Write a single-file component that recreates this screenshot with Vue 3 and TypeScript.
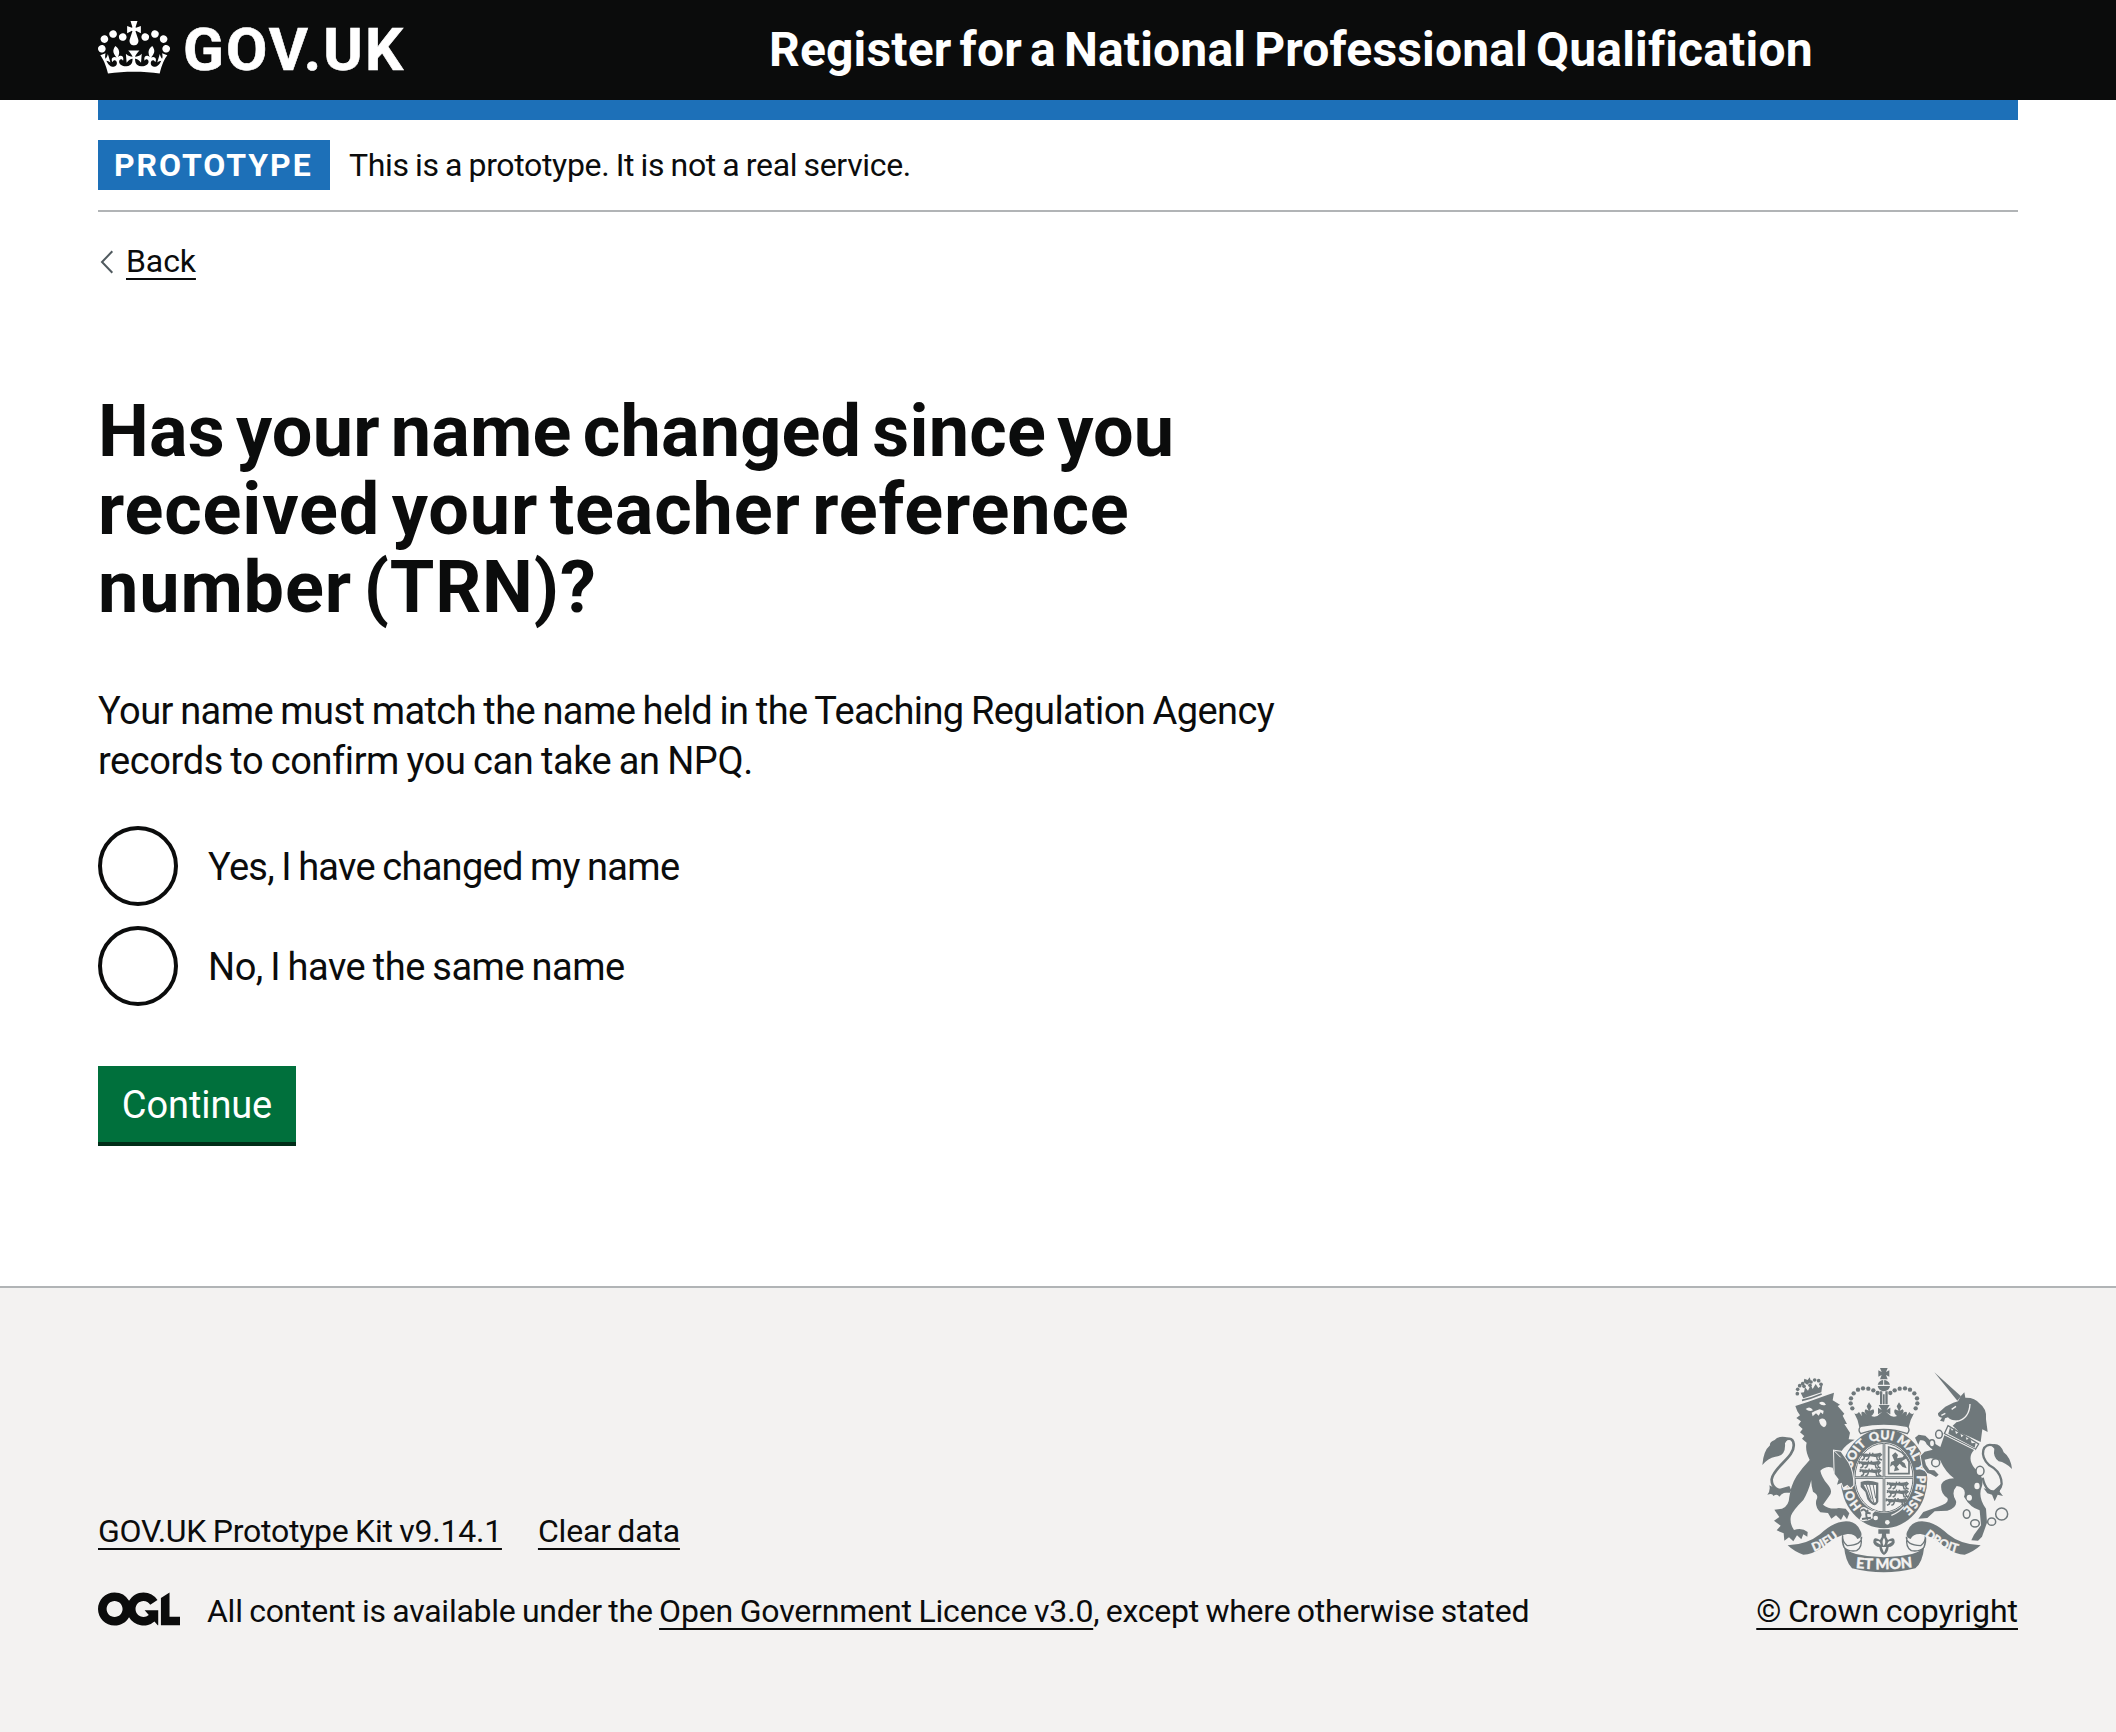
<script setup lang="ts">
interface Line { text: string; ls: number }
const headingLines: Line[] = [
  { text: 'Has your name changed since you', ls: 0.18 },
  { text: 'received your teacher reference', ls: 0.83 },
  { text: 'number (TRN)?', ls: 0.85 },
]
const bodyLines: Line[] = [
  { text: 'Your name must match the name held in the Teaching Regulation Agency', ls: -0.58 },
  { text: 'records to confirm you can take an NPQ.', ls: -0.42 },
]
const options: Line[] = [
  { text: 'Yes, I have changed my name', ls: -0.7 },
  { text: 'No, I have the same name', ls: -0.48 },
]
// pearls of the central crown's left arch; the right arch mirrors them
const pearls = [
  [337, 175], [332, 160], [333, 145], [341, 130], [354, 119], [369, 115], [385, 116], [400, 121], [413, 129],
]
const smallPearls = [
  [172, 131], [173, 118], [179, 107], [188, 101], [213, 96], [224, 90], [236, 92], [243, 103], [210, 106], [192, 109],
]
</script>

<template>
  <div class="page">
    <header class="header">
      <div class="container header-row">
        <a class="logo">
          <svg class="crown" viewBox="0 0 132 97" aria-hidden="true"><path fill="currentColor" fill-rule="evenodd" d="M25 30.2c3.5 1.5 7.7-.2 9.1-3.7 1.5-3.6-.2-7.8-3.9-9.2-3.6-1.4-7.6.3-9.1 3.9-1.4 3.5.3 7.5 3.9 9zM9 39.5c3.6 1.5 7.8-.2 9.2-3.7 1.5-3.6-.2-7.8-3.9-9.1-3.6-1.5-7.6.2-9.1 3.8-1.4 3.5.3 7.5 3.8 9zM4.4 57.2c3.5 1.5 7.7-.2 9.1-3.8 1.5-3.6-.2-7.7-3.9-9.1-3.5-1.5-7.6.3-9.1 3.8-1.4 3.5.3 7.6 3.9 9.1zm38.3-21.4c3.5 1.5 7.7-.2 9.1-3.8 1.5-3.6-.2-7.7-3.9-9.1-3.6-1.5-7.6.3-9.1 3.8-1.3 3.6.4 7.7 3.9 9.1zm64.4-5.6c-3.6 1.5-7.8-.2-9.1-3.7-1.5-3.6.2-7.8 3.8-9.2 3.6-1.4 7.7.3 9.2 3.9 1.3 3.5-.4 7.5-3.9 9zm15.9 9.3c-3.6 1.5-7.7-.2-9.1-3.7-1.5-3.6.2-7.8 3.7-9.1 3.6-1.5 7.7.2 9.2 3.8 1.5 3.5-.3 7.5-3.8 9zm4.7 17.7c-3.6 1.5-7.8-.2-9.2-3.8-1.5-3.6.2-7.7 3.9-9.1 3.6-1.5 7.7.3 9.2 3.8 1.3 3.5-.4 7.6-3.9 9.1zM89.3 35.8c-3.6 1.5-7.8-.2-9.2-3.8-1.4-3.6.2-7.7 3.9-9.1 3.6-1.5 7.7.3 9.2 3.8 1.4 3.6-.3 7.7-3.9 9.1zM69.7 17.7l8.9 4.7V9.3l-8.9 2.8c-.2-.3-.5-.6-.9-.9L72.4 0H59.6l3.5 11.2c-.3.3-.6.5-.9.9l-8.8-2.8v13.1l8.8-4.7c.3.3.6.7.9.9l-5 15.4v.1c-.2.8-.4 1.6-.4 2.4 0 4.1 3.1 7.5 7 8.1h.2c.3 0 .7.1 1 .1.4 0 .7 0 1-.1h.2c4-.6 7.1-4.1 7.1-8.1 0-.8-.1-1.7-.4-2.4V34l-5.1-15.4c.4-.2.7-.6 1-.9zM66 92.8c16.9 0 32.8 1.1 47.1 3.2 4-16.9 8.9-26.7 14-33.5l-9.6-3.4c1 4.9 1.1 7.2 0 10.2-1.5-1.4-3-4.3-4.2-8.7L108.6 76c2.8-2 5-3.2 7.5-3.3-4.4 9.4-10 11.9-13.6 11.2-4.3-.8-6.3-4.6-5.6-7.9 1-4.7 5.7-5.9 8-.5 4.3-8.7-3-11.4-7.6-8.8 7.1-7.2 7.9-13.5 2.1-21.1-8 6.1-8.1 12.3-4.5 20.8-4.7-5.4-12.1-2.5-9.5 6.2 3.4-5.2 7.9-2 7.2 3.1-.6 4.3-6.4 7.8-13.5 7.2-10.3-.9-10.9-8-11.2-13.8 2.5-.5 7.1 1.8 11 7.3L80.2 60c-4.1 4.4-8 5.3-12.3 5.4 1.4-4.4 8-11.6 8-11.6H55.5s6.4 7.2 7.9 11.6c-4.2-.1-8-1-12.3-5.4l1.4 16.4c3.9-5.5 8.5-7.7 10.9-7.3-.3 5.8-.9 12.8-11.1 13.8-7.2.6-12.9-2.9-13.5-7.2-.7-5 3.8-8.3 7.1-3.1 2.7-8.7-4.6-11.6-9.4-6.2 3.7-8.5 3.6-14.7-4.6-20.8-5.8 7.6-5 13.9 2.2 21.1-4.7-2.6-11.9.1-7.7 8.8 2.3-5.5 7.1-4.2 8.1.5.7 3.3-1.3 7.1-5.7 7.9-3.5.7-9-1.8-13.5-11.2 2.5.1 4.7 1.3 7.5 3.3l-4.7-15.4c-1.2 4.4-2.7 7.2-4.3 8.7-1.1-3-.9-5.3 0-10.2l-9.5 3.4c5 6.9 9.9 16.7 14 33.5 14.8-2.1 30.8-3.2 47.7-3.2z" /></svg>
          <span class="logo-text">GOV.UK</span>
        </a>
        <a class="service">Register for a National Professional Qualification</a>
      </div>
    </header>

    <div class="container">
      <div class="bar"></div>
      <div class="phase">
        <strong class="tag">PROTOTYPE</strong>
        <span class="phase-text">This is a prototype. It is not a real service.</span>
      </div>
      <a class="back">
        <svg class="chevron" viewBox="0 0 16 24" aria-hidden="true"><path d="M14.3 1.3 4 12l10.300 10.700" /></svg>
        <span class="link">Back</span>
      </a>
      <main class="main">
        <h1 class="heading">
          <span v-for="l in headingLines" :key="l.text" class="line" :style="{ letterSpacing: l.ls + 'px' }">{{ l.text }}</span>
        </h1>
        <p class="body">
          <span v-for="l in bodyLines" :key="l.text" class="line" :style="{ letterSpacing: l.ls + 'px' }">{{ l.text }}</span>
        </p>
        <div class="radios">
          <label v-for="o in options" :key="o.text" class="radio">
            <span class="circle"></span>
            <span class="radio-label" :style="{ letterSpacing: o.ls + 'px' }">{{ o.text }}</span>
          </label>
        </div>
        <button class="button" type="button">Continue</button>
      </main>
    </div>

    <footer class="footer">
      <div class="container footer-row">
        <div class="footer-left">
          <div class="links">
            <a class="link kit">GOV.UK Prototype Kit v9.14.1</a>
            <a class="link clear">Clear data</a>
          </div>
          <div class="licence">
            <svg class="ogl" viewBox="0 0 483.2 195.7" aria-label="OGL"><path fill="currentColor" d="M421.5 142.8V.1l-50.7 32.3v161.1h112.4v-50.7zm-122.3-9.6A47.12 47.12 0 0 1 221 97.8c0-26 21.1-47.1 47.1-47.1 16.7 0 31.4 8.7 39.7 21.8l42.7-27.2A97.63 97.63 0 0 0 268.1 0c-36.5 0-68.3 20.1-85.1 49.7A98 98 0 0 0 97.8 0C43.9 0 0 43.9 0 97.800s43.900 97.800 97.800 97.800c36.500 0 68.300-20.100 85.100-49.700a97.760 97.760 0 0 0 149.600 25.400l19.400 22.200h3v-87.800h-80l24.300 27.500zM97.800 145c-26 0-47.100-21.100-47.100-47.100s21.100-47.100 47.100-47.100 47.100 21.100 47.100 47.100S123.800 145 97.800 145" /></svg>
            <p class="licence-text"><span class="lt-a">All content is available under the </span><a class="link lt-b">Open Government Licence v3.0</a><span class="lt-c">, except where otherwise stated</span></p>
          </div>
        </div>
        <div class="copyright">
          <svg class="arms" viewBox="0 0 870 690" aria-hidden="true">
            <defs>
              <path id="garter" d="M432 498A99 115 0 0 1 432 268A99 115 0 0 1 432 498" />
              <path id="dieu" d="M204 611Q262 594 310 550" />
              <path id="droit" d="M543 548Q595 598 664 611" />
              <path id="etmon" d="M335 653Q431 664 530 650" />
              <g id="beast">
                <path d="M2 10Q4 2 12 5L22 9 38 5 50 8 60 2 64 6 57 13 60 20 66 22M50 12 52 21 58 23M28 10 24 19 18 22M14 9 12 18 5 22M6 6 1 2M38 7V0M28 7 30 0" fill="none" stroke="currentColor" stroke-width="4.500" />
                <path d="M4 6Q16 0 30 5L56 2 63 8 50 14 30 11 12 14Z" />
              </g>
            </defs>
            <g fill="currentColor">
              <!-- lion -->
              <path d="M150 424Q94 426 95 388C100 350 166 322 161 282C159 263 140 260 126 280" class="stroke" stroke-width="8" />
              <path d="M146 263Q116 255 104 270Q88 276 90 286Q70 303 67 345Q84 324 106 320Q138 318 135 280ZM88 406Q92 422 82 434Q98 428 100 438Q112 430 118 440Q130 425 155 424L148 408 112 418Z" />
              <path d="M166 168 205 155 245 141 264 134 282 128 278 151 300 164 293 168 313 191 308 197 321 222 313 222 330 248 326 268 344 269Q316 284 303 305L326 338Q342 370 340 406L331 413 322 404 310 412 305 398 291 404 296 388 284 372 278 353Q258 346 241 362Q245 382 262 402Q282 425 266 440L249 464Q270 480 296 474L317 476 328 490 321 508 311 494 303 510 288 496 274 506 264 489 241 487Q224 470 229 450Q238 435 219 425Q213 405 214 390Q205 425 190 450Q160 480 153 497Q148 520 162 540Q186 532 203 546L202 560 190 553 184 568 171 556 160 574 147 562 133 572 131 550 110 541 122 527 102 512 118 501 103 479 126 476Q147 468 148 440Q153 405 170 378Q188 352 209 330Q194 300 200 278L186 266 193 258 180 247 188 237 175 225 183 214 169 204 180 196 172 184Z" />
              <path d="M197 177Q210 166 219 181Q207 186 197 177ZM237 159Q250 150 258 164Q246 170 237 159ZM215 188 225 183 239 178 251 182 249 193 242 187 236 197 228 190 218 199ZM237 210Q250 200 258 213Q263 226 252 232Q240 228 237 210Z" class="paper" />
              <path d="M182 128 190 145 244 127 247 104 235 114 227 102 218 117 212 105 204 122 195 112 192 127ZM193 86 203 90 209 82 213 94 202 104 191 97Z" />
              <path d="M186 151Q215 145 245 132" class="stroke" stroke-width="5" />
              <circle v-for="([x, y], i) in smallPearls" :key="i" :cx="x" :cy="y" r="5.500" />

              <!-- unicorn -->
              <path d="M583 67 663 139 652 152Z" />
              <path d="M594 190 616 170 640 158 654 154 662 139 673 127 676 143Q705 142 718 160Q742 177 738 208L743 246 727 238 722 276Q696 262 660 248L638 227 656 211Q631 213 624 202L615 205 612 215 600 212 606 203Q593 202 594 190Z" />
              <path d="M690 162Q688 205 652 214Q634 216 622 207M635 178 648 169M604 196 616 190" class="cut" stroke-width="4" />
              <path d="M624 227 716 282 706 298 613 251Z" class="outline" stroke-width="4" />
              <path d="M630 232 636 242 644 234 648 252 660 244 664 262 675 253 680 270 690 262 695 280 707 278 704 293 625 251Z" />

              <!-- central crown -->
              <path d="M420 54H443L438 66 448 61V80L438 75 443 88H420L425 75 415 80V61L425 66Z" />
              <path d="M413 104Q418 90 431 90Q445 90 450 104ZM413 108H450Q448 123 431 124Q416 123 413 108Z" />
              <path d="M431 89V105" class="cut" stroke-width="3" />
              <path d="M420 124H427V163H420ZM436 124H443V163H436ZM429 133H434V163H429Z" />
              <g v-for="([x, y], i) in pearls" :key="'p' + i"><circle :cx="x" :cy="y" r="6.500" /><circle :cx="864 - x" :cy="y" r="6.500" /></g>
              <path d="M343 190Q350 195 357 186L366 199Q360 180 373 187L383 198Q369 184 377 178L386 182 380 169 387 157 395 169 389 182 400 178Q407 187 394 198Q408 205 420 191L427 185 414 193V173L425 180 416 165H449L440 180 451 173V193L438 185 445 191Q456 205 471 198Q458 187 465 178L476 182 470 169 477 157 485 169 479 182 488 178Q496 184 482 198L492 187Q505 180 499 199L508 186Q514 195 522 190Q510 210 506 232Q431 214 358 232Q355 210 343 190Z" />
              <path d="M362 229Q431 215 502 229Q512 239 502 251Q431 225 362 251Q352 240 362 229Z" class="outline" stroke-width="4" />

              <!-- garter and shield -->
              <ellipse cx="432" cy="386" rx="130" ry="149" />
              <ellipse cx="432" cy="383" rx="90" ry="106" class="paper" />
              <ellipse cx="432" cy="383" rx="87" ry="103" class="outline" stroke-width="3" />
              <path d="M432 280V486M345 383H519" class="stroke" stroke-width="8" />
              <path d="M432 280V486M345 383H519" class="cut" stroke-width="2" />
              <use href="#beast" x="360" y="308" /><use href="#beast" x="356" y="332" /><use href="#beast" x="358" y="356" />
              <use href="#beast" x="440" y="395" /><use href="#beast" x="440" y="419" /><use href="#beast" x="436" y="444" />
              <path d="M446 291Q492 300 507 336V371H446Z" class="outline" stroke-width="5" />
              <path d="M456 316 466 307 474 315 471 325 488 322 495 311 500 325 485 334 494 340 500 355 488 351 479 341 471 350 478 360 462 364 465 351 459 344 450 350 453 336 463 332Z" />
              <path d="M362 396Q385 388 415 398V455Q404 479 382 448L376 426 362 411ZM371 404 382 424 389 443Q400 464 408 455V405Z" fill-rule="evenodd" />
              <path d="M378 402 394 448M388 402 401 457M399 402 407 445" class="stroke" stroke-width="3" />
              <g class="motto" font-size="37">
                <text><textPath href="#garter" startOffset="17.500%">HON</textPath></text>
                <text><textPath href="#garter" startOffset="35.500%">SOIT</textPath></text>
                <text><textPath href="#garter" startOffset="49%">QUI</textPath></text>
                <text><textPath href="#garter" startOffset="61.500%">MAL</textPath></text>
                <text><textPath href="#garter" startOffset="71%">Y</textPath></text>
                <text><textPath href="#garter" startOffset="82.500%">PENSE</textPath></text>
              </g>
              <path d="M360 478Q367 466 380 475L397 483 409 480 398 491 398 505 386 511 370 514 358 510 365 496Z" class="paper" />
              <path d="M363 483Q372 473 379 486L392 491M384 480Q373 493 384 509M366 507 393 503" class="stroke" stroke-width="6" />
              <path d="M454 496Q476 488 492 470" class="cut" stroke-width="4" />
              <circle cx="407" cy="504" r="7" class="paper" /><circle cx="442" cy="517" r="7" class="paper" />
              <!-- lion's foreleg, laid over the garter -->
              <path d="M282 302 302 305 325 338Q341 368 340 406L331 413 322 404 310 412 305 398 291 404 296 388 284 372Z" class="over" />
              <path d="M282 302 302 322" class="cut" stroke-width="3" />

              <!-- unicorn's body, laid over the garter -->
              <path class="over" d="M613 256 702 300Q680 324 704 355Q733 378 726 408Q712 440 738 476L741 518 726 560 714 572 694 571 702 554 723 526 719 481Q690 472 672 440Q682 412 650 408Q632 428 648 453Q652 474 622 482L584 484 562 504 535 506 550 486 594 470Q630 460 622 444Q600 430 604 403Q612 386 642 385Q616 366 600 330L572 325 554 329 558 345 568 360 583 361 596 374 588 381 572 372 562 369 548 350 542 317 554 305 578 299 560 283Q555 268 540 271L535 284 525 263 536 254 556 257 575 275 601 291Z" />
              <g class="outline" stroke-width="4.500">
                <ellipse cx="597" cy="253" rx="10" ry="12" /><ellipse cx="576" cy="280" rx="8" ry="11" /><ellipse cx="587" cy="338" rx="12" ry="12" />
                <ellipse cx="720" cy="363" rx="12" ry="14" /><ellipse cx="680" cy="492" rx="10" ry="13" /><ellipse cx="705" cy="520" rx="13" ry="11" />
                <ellipse cx="755" cy="515" rx="12" ry="11" /><circle cx="785" cy="492" r="18" />
              </g>
              <ellipse cx="711" cy="408" rx="8" ry="10" class="paper" /><ellipse cx="688" cy="443" rx="8" ry="9" class="paper" />
              <path d="M728 383C735 418 752 428 765 424C800 415 785 365 748 346C715 318 728 272 763 288" class="stroke" stroke-width="7" />
              <path d="M752 284Q780 275 791 307Q812 322 816 357Q796 337 776 334Q758 320 763 296ZM785 400 779 425 789 438 773 434 764 454 756 434 742 430 731 415 760 422Z" />

              <!-- ribbon -->
              <path d="M143 586Q200 585 240 553Q278 516 318 514Q352 514 363 546Q369 562 352 567Q345 551 322 552Q285 558 251 590Q215 614 190 614Q164 606 143 586ZM722 586Q664 585 624 553Q586 516 546 514Q512 514 501 546Q495 562 512 567Q519 551 542 552Q579 558 613 590Q649 614 674 614Q700 606 722 586Z" />
              <path d="M308 556Q306 575 322 587Q365 585 365 560M308 556Q305 575 312 592Q325 606 350 602Q368 592 363 562M556 556Q558 575 542 587Q499 585 499 560M556 556Q559 575 552 592Q539 606 514 602Q496 592 501 562" class="stroke" stroke-width="4" />
              <path d="M312 588Q320 604 348 612Q431 632 516 612Q544 604 553 588Q548 638 526 655Q431 679 336 655Q316 635 312 588Z" />
              <path d="M415 538H449V551H438Q437 562 444 570Q465 556 464 578Q459 590 446 591Q444 609 432 615Q420 609 418 591Q405 590 400 578Q399 556 420 570Q427 562 426 551H415Z" />
              <path d="M432 563Q424 575 431 588Q440 575 432 563ZM407 575Q420 568 422 584M457 575Q444 568 442 584M425 591H439L432 608Z" class="paper" />
              <g class="motto" font-size="36">
                <text><textPath href="#dieu" startOffset="50%">DIEU</textPath></text>
                <text><textPath href="#droit" startOffset="50%">DROIT</textPath></text>
                <text font-size="44"><textPath href="#etmon" startOffset="50%">ET MON</textPath></text>
              </g>
            </g>
          </svg>
          <a class="link crown-link">© Crown copyright</a>
        </div>
      </div>
    </footer>
  </div>
</template>

<style>
body { margin: 0; background: #f3f2f1; }
</style>

<style scoped>
.page { background: #fff; color: #0b0c0c; font-family: Roboto, "Liberation Sans", sans-serif; font-size: 32px; line-height: 40px; word-spacing: -1.2px; }
.container { width: 1920px; margin: 0 auto; }
.header { height: 100px; background: #0b0c0c; color: #fff; }
.header-row { display: flex; align-items: center; height: 100px; }
.logo { display: flex; align-items: center; width: 671px; }
.crown { display: block; width: 72px; height: 53px; margin-top: -5px; }
.logo-text { margin-left: 13px; font-size: 60px; line-height: 60px; font-weight: 700; letter-spacing: 2.1px; -webkit-text-stroke: 0.6px #fff; }
.service { font-size: 48px; line-height: 60px; font-weight: 700; letter-spacing: 0.16px; word-spacing: -4px; white-space: nowrap; }
.bar { height: 20px; background: #1d70b8; }
.phase { display: flex; align-items: center; height: 90px; border-bottom: 2px solid #b1b4b6; }
.tag { box-sizing: border-box; width: 232px; height: 50px; padding-left: 16px; background: #1d70b8; color: #fff; line-height: 50px; letter-spacing: 1.95px; }
.phase-text { margin-left: 19px; letter-spacing: -0.34px; white-space: nowrap; }
.back { display: flex; align-items: center; width: max-content; height: 40px; margin-top: 29px; letter-spacing: -0.1px; }
.chevron { width: 16px; height: 24px; margin-right: 12px; margin-top: 2px; fill: none; stroke: #505a5f; stroke-width: 2; }
.link { color: #0b0c0c; text-decoration: underline; text-decoration-thickness: 2px; text-underline-offset: 6px; text-decoration-skip-ink: none; }
.main { box-sizing: border-box; height: 1005px; padding-top: 112px; }
.heading { margin: 0; font-size: 72px; line-height: 78px; font-weight: 700; word-spacing: -7px; }
.line { display: block; white-space: nowrap; }
.body { margin: 59px 0 40px; font-size: 38px; line-height: 50px; word-spacing: -1.5px; }
.radios { display: flex; flex-direction: column; gap: 20px; }
.radio { display: flex; align-items: center; height: 80px; font-size: 38px; line-height: 50px; word-spacing: -1.5px; }
.circle { box-sizing: border-box; width: 80px; height: 80px; border: 4px solid #0b0c0c; border-radius: 50%; }
.radio-label { margin: 2px 0 0 30px; white-space: nowrap; }
.button { display: block; width: 198px; height: 76px; margin: 60px 0 0; padding: 2px 0 0; border: 0; background: #00703c; box-shadow: 0 4px 0 #002d18; color: #fff; font: 400 38px/50px Roboto, "Liberation Sans", sans-serif; letter-spacing: -0.1px; }
.footer { box-sizing: border-box; height: 446px; border-top: 2px solid #b1b4b6; background: #f3f2f1; }
.footer-row { display: flex; justify-content: space-between; height: 343px; align-items: flex-end; }
.links { display: flex; gap: 36px; margin-bottom: 40px; }
.kit { letter-spacing: -0.23px; }
.clear { letter-spacing: -0.19px; }
.licence { display: flex; align-items: flex-start; height: 40px; }
.ogl { display: block; width: 82px; height: 34px; margin: 1px 27px 0 0; }
.licence-text { margin: 0; white-space: pre; }
.lt-a { letter-spacing: -0.26px; }
.lt-b { letter-spacing: -0.16px; }
.lt-c { letter-spacing: -0.25px; }
.copyright { display: flex; flex-direction: column; align-items: flex-end; }
.arms { display: block; width: 290px; height: 230px; margin: 0 -12px 11px 0; color: #6f787b; }
.crown-link { letter-spacing: -0.05px; }
.stroke { fill: none; stroke: currentColor; }
.cut { fill: none; stroke: #f3f2f1; }
.paper { fill: #f3f2f1; }
.outline { fill: #f3f2f1; stroke: currentColor; }
.over { stroke: #f3f2f1; stroke-width: 6; paint-order: stroke; }
.motto { fill: #f3f2f1; stroke: #f3f2f1; stroke-width: 1; font-family: Lato, sans-serif; font-weight: 900; text-anchor: middle; }
</style>
